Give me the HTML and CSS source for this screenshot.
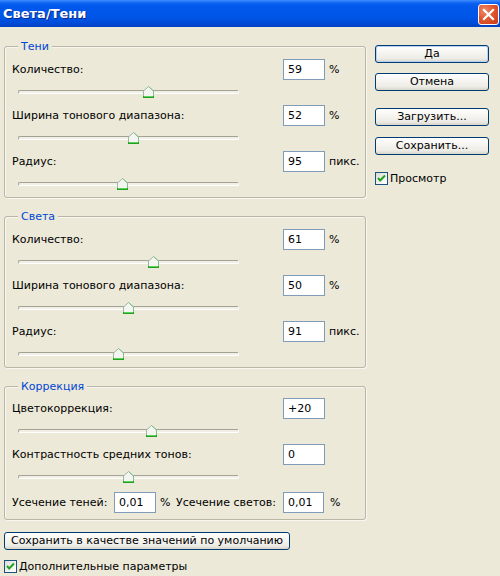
FILE: index.html
```html
<!DOCTYPE html>
<html lang="ru">
<head>
<meta charset="utf-8">
<title>Света/Тени</title>
<link rel="stylesheet" href="styles.css">
</head>
<body>
<div class="window">
  <div class="titlebar">
    <span class="title">Света/Тени</span>
    <span class="close"><svg width="19" height="19" viewBox="0 0 19 19"><path d="M5 5 L14 14 M14 5 L5 14" stroke="#fff" stroke-width="2.2" stroke-linecap="square"/></svg></span>
  </div>
  <div class="content">
    <div class="main">
      <div class="left">
        <div class="group g1">
          <div class="legend">Тени</div>
          <div class="rows">
            <div class="row"><span class="lbl">Количество:</span><span class="field">59</span><span class="unit">%</span></div>
            <div class="slider"><div class="track"></div><svg class="thumb" style="left:125px" width="11" height="12" viewBox="0 0 11 12"><path d="M0.5 5 L5.5 0.5 L10.5 5 V11.5 H0.5 Z" fill="#F4F4F0" stroke="#9DB8A4"/><path d="M5.5 0.5 L10.5 5 V10" fill="none" stroke="#7DC08A"/><rect x="0" y="10" width="11" height="2" fill="#21A121"/><rect x="1" y="10" width="9" height="1" fill="#5ED05E"/></svg></div>
            <div class="row"><span class="lbl">Ширина тонового диапазона:</span><span class="field">52</span><span class="unit">%</span></div>
            <div class="slider"><div class="track"></div><svg class="thumb" style="left:110px" width="11" height="12" viewBox="0 0 11 12"><path d="M0.5 5 L5.5 0.5 L10.5 5 V11.5 H0.5 Z" fill="#F4F4F0" stroke="#9DB8A4"/><path d="M5.5 0.5 L10.5 5 V10" fill="none" stroke="#7DC08A"/><rect x="0" y="10" width="11" height="2" fill="#21A121"/><rect x="1" y="10" width="9" height="1" fill="#5ED05E"/></svg></div>
            <div class="row"><span class="lbl">Радиус:</span><span class="field">95</span><span class="unit">пикс.</span></div>
            <div class="slider"><div class="track"></div><svg class="thumb" style="left:99px" width="11" height="12" viewBox="0 0 11 12"><path d="M0.5 5 L5.5 0.5 L10.5 5 V11.5 H0.5 Z" fill="#F4F4F0" stroke="#9DB8A4"/><path d="M5.5 0.5 L10.5 5 V10" fill="none" stroke="#7DC08A"/><rect x="0" y="10" width="11" height="2" fill="#21A121"/><rect x="1" y="10" width="9" height="1" fill="#5ED05E"/></svg></div>
          </div>
        </div>

        <div class="group g2">
          <div class="legend">Света</div>
          <div class="rows">
            <div class="row"><span class="lbl">Количество:</span><span class="field">61</span><span class="unit">%</span></div>
            <div class="slider"><div class="track"></div><svg class="thumb" style="left:130px" width="11" height="12" viewBox="0 0 11 12"><path d="M0.5 5 L5.5 0.5 L10.5 5 V11.5 H0.5 Z" fill="#F4F4F0" stroke="#9DB8A4"/><path d="M5.5 0.5 L10.5 5 V10" fill="none" stroke="#7DC08A"/><rect x="0" y="10" width="11" height="2" fill="#21A121"/><rect x="1" y="10" width="9" height="1" fill="#5ED05E"/></svg></div>
            <div class="row"><span class="lbl">Ширина тонового диапазона:</span><span class="field">50</span><span class="unit">%</span></div>
            <div class="slider"><div class="track"></div><svg class="thumb" style="left:105px" width="11" height="12" viewBox="0 0 11 12"><path d="M0.5 5 L5.5 0.5 L10.5 5 V11.5 H0.5 Z" fill="#F4F4F0" stroke="#9DB8A4"/><path d="M5.5 0.5 L10.5 5 V10" fill="none" stroke="#7DC08A"/><rect x="0" y="10" width="11" height="2" fill="#21A121"/><rect x="1" y="10" width="9" height="1" fill="#5ED05E"/></svg></div>
            <div class="row"><span class="lbl">Радиус:</span><span class="field">91</span><span class="unit">пикс.</span></div>
            <div class="slider"><div class="track"></div><svg class="thumb" style="left:95px" width="11" height="12" viewBox="0 0 11 12"><path d="M0.5 5 L5.5 0.5 L10.5 5 V11.5 H0.5 Z" fill="#F4F4F0" stroke="#9DB8A4"/><path d="M5.5 0.5 L10.5 5 V10" fill="none" stroke="#7DC08A"/><rect x="0" y="10" width="11" height="2" fill="#21A121"/><rect x="1" y="10" width="9" height="1" fill="#5ED05E"/></svg></div>
          </div>
        </div>

        <div class="group g3">
          <div class="legend">Коррекция</div>
          <div class="rows">
            <div class="row"><span class="lbl">Цветокоррекция:</span><span class="field">+20</span><span class="unit"></span></div>
            <div class="slider"><div class="track"></div><svg class="thumb" style="left:128px" width="11" height="12" viewBox="0 0 11 12"><path d="M0.5 5 L5.5 0.5 L10.5 5 V11.5 H0.5 Z" fill="#F4F4F0" stroke="#9DB8A4"/><path d="M5.5 0.5 L10.5 5 V10" fill="none" stroke="#7DC08A"/><rect x="0" y="10" width="11" height="2" fill="#21A121"/><rect x="1" y="10" width="9" height="1" fill="#5ED05E"/></svg></div>
            <div class="row"><span class="lbl">Контрастность средних тонов:</span><span class="field">0</span><span class="unit"></span></div>
            <div class="slider"><div class="track"></div><svg class="thumb" style="left:105px" width="11" height="12" viewBox="0 0 11 12"><path d="M0.5 5 L5.5 0.5 L10.5 5 V11.5 H0.5 Z" fill="#F4F4F0" stroke="#9DB8A4"/><path d="M5.5 0.5 L10.5 5 V10" fill="none" stroke="#7DC08A"/><rect x="0" y="10" width="11" height="2" fill="#21A121"/><rect x="1" y="10" width="9" height="1" fill="#5ED05E"/></svg></div>
            <div class="clip">
              <span class="clip-lbl1">Усечение теней:</span>
              <span class="field">0,01</span>
              <span class="clip-pct1">%</span>
              <span class="clip-lbl2">Усечение светов:</span>
              <span class="field f2">0,01</span>
              <span class="clip-pct2">%</span>
            </div>
          </div>
        </div>
      </div>

      <div class="right">
        <div class="btn default">Да</div>
        <div class="btn cancel">Отмена</div>
        <div class="btn load">Загрузить...</div>
        <div class="btn save">Сохранить...</div>
        <div class="check preview">
          <span class="box"><svg width="11" height="11" viewBox="0 0 11 11"><path d="M2 5 L4.2 7.5 L9 2.5" fill="none" stroke="#21A121" stroke-width="2"/></svg></span>
          <span>Просмотр</span>
        </div>
      </div>
    </div>

    <div class="btn wide">Сохранить в качестве значений по умолчанию</div>
    <div class="check extra">
      <span class="box"><svg width="11" height="11" viewBox="0 0 11 11"><path d="M2 5 L4.2 7.5 L9 2.5" fill="none" stroke="#21A121" stroke-width="2"/></svg></span>
      <span>Дополнительные параметры</span>
    </div>
  </div>
</div>
</body>
</html>
```

FILE: styles.css
```css
* { box-sizing: border-box; }

html, body {
  margin: 0;
  padding: 0;
}

body {
  width: 500px;
  height: 576px;
  overflow: hidden;
  background: #ECE9D8;
  font-family: "DejaVu Sans", "Liberation Sans", sans-serif;
  font-size: 11px;
  color: #000;
}

.window {
  width: 500px;
  height: 576px;
  display: flex;
  flex-direction: column;
}

.titlebar {
  height: 27px;
  flex: none;
  display: flex;
  justify-content: space-between;
  align-items: flex-start;
  padding: 0 1px 0 3px;
  background: linear-gradient(#3C8DFB 0, #0F63F2 3px, #0058EC 6px, #0055E6 18px, #004CD8 23px, #0043C4 26px, #0047CC 27px);
}

.title {
  margin-top: 6px;
  color: #fff;
  font-weight: bold;
  font-size: 13px;
  line-height: 15px;
  text-shadow: 1px 1px 0 #0A2A8A;
}

.close {
  margin-top: 4px;
  width: 21px;
  height: 21px;
  border: 1px solid #fff;
  border-radius: 3px;
  background: radial-gradient(circle at 30% 30%, #EE8A6C 0, #E2582F 45%, #C63A17 100%);
  display: flex;
}

.content {
  flex: 1;
  display: flex;
  flex-direction: column;
  padding-left: 4px;
}

.main {
  display: flex;
}

.left {
  width: 362px;
  flex: none;
}

.right {
  width: 114px;
  margin-left: 9px;
  padding-top: 18px;
  display: flex;
  flex-direction: column;
}

.group {
  border: 1px solid #B9B6A6;
  border-radius: 3px;
  box-shadow: inset 1px 1px 0 #F8F7F2, 1px 1px 0 #F8F7F2;
}

.g1 { margin-top: 19px; }
.g2 { margin-top: 18px; }
.g3 { margin-top: 18px; padding-bottom: 6px; }

.legend {
  width: fit-content;
  height: 13px;
  line-height: 13px;
  margin: -7px 0 0 13px;
  padding: 0 3px;
  background: #ECE9D8;
  color: #0046D5;
}

.rows {
  padding: 6px 0 0 7px;
}

.g3 .rows { padding-top: 5px; }

.row {
  display: grid;
  grid-template-columns: 1fr 42px 36px;
  column-gap: 4px;
  align-items: center;
  height: 21px;
}

.lbl {
  white-space: nowrap;
}

.field {
  height: 21px;
  border: 1px solid #7F9DB9;
  background: #fff;
  padding-left: 4px;
  line-height: 19px;
}

.unit {
  white-space: nowrap;
}

.slider {
  position: relative;
  height: 25px;
  padding-top: 10px;
  margin-left: 6px;
  width: 221px;
}

.track {
  height: 4px;
  border: 1px solid;
  border-color: #A3A295 #FFFFFF #FFFFFF #A3A295;
  border-radius: 2px;
  background: #F1EFE6;
}

.thumb {
  position: absolute;
  top: 6px;
}

.clip {
  margin-top: 2px;
  display: flex;
  align-items: center;
  height: 21px;
  white-space: nowrap;
}

.clip-lbl1 { width: 102px; }
.clip .field { width: 42px; }
.clip .f2 { width: 41px; }
.clip-pct1 { width: 20px; padding-left: 4px; }
.clip-lbl2 { width: 107px; }
.clip-pct2 { padding-left: 6px; }

.btn {
  height: 18px;
  border: 1px solid #003C74;
  border-radius: 3px;
  background: linear-gradient(#FFFFFF 0, #F6F5F1 40%, #ECEBE5 80%, #D8D4C8 100%);
  display: flex;
  align-items: center;
  justify-content: center;
  white-space: nowrap;
  line-height: 14px;
}

.default {
  box-shadow: inset 0 0 0 1px #B8D1F2;
}

.cancel { margin-top: 10px; }
.load { margin-top: 17px; }
.save { margin-top: 11px; }

.wide {
  width: 286px;
  margin-top: 12px;
}

.check {
  display: flex;
  align-items: center;
  gap: 2px;
  height: 13px;
}

.preview { margin-top: 17px; }
.extra { margin-top: 10px; }

.box {
  width: 13px;
  height: 13px;
  border: 1px solid #1C5180;
  background: linear-gradient(135deg, #DCDCD5 0, #F4F4F0 60%, #FFFFFF 100%);
  display: flex;
  flex: none;
}
```
